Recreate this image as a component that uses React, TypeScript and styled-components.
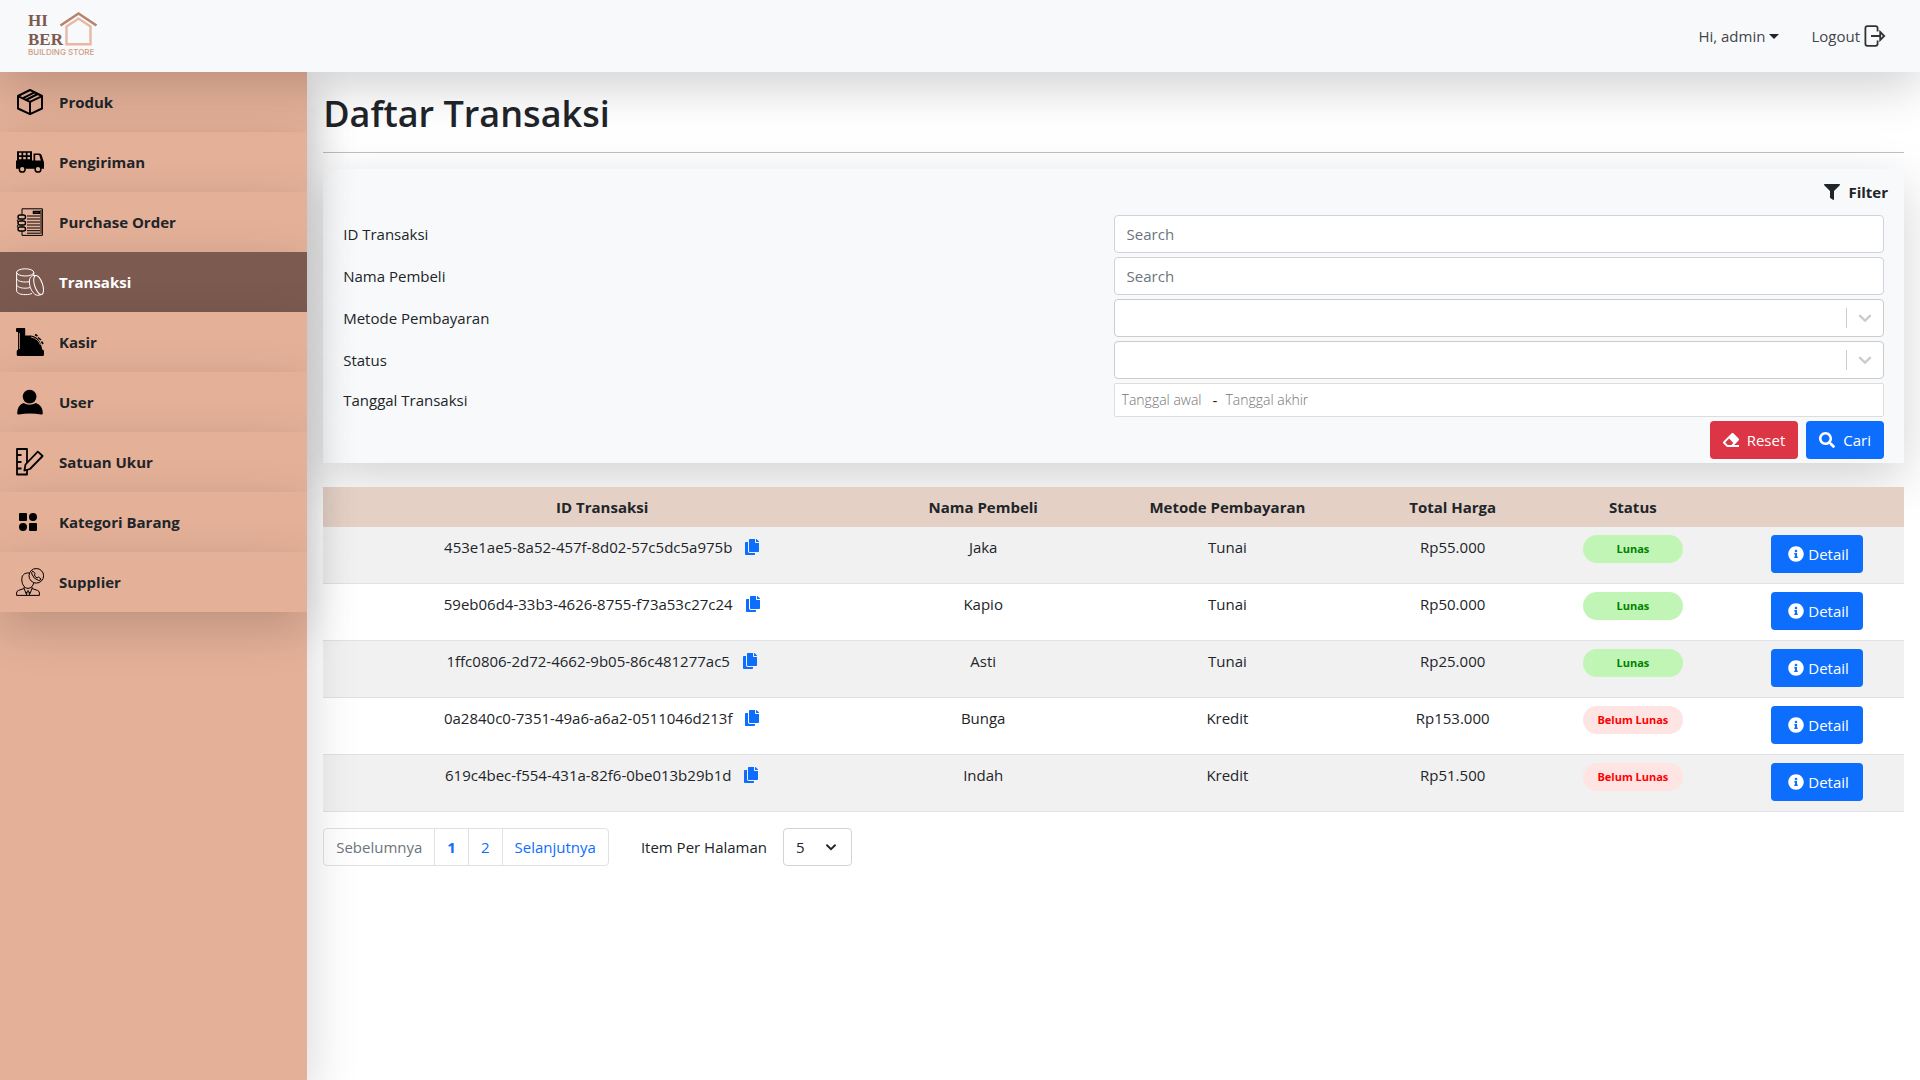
import React from "react";
import styled, { createGlobalStyle } from "styled-components";
import { FaCopy, FaEraser, FaFilter, FaInfoCircle, FaSearch } from "react-icons/fa";

const shadow = "0 16px 48px rgba(0, 0, 0, 0.175)";

const GlobalStyle = createGlobalStyle`
  *, *::before, *::after { box-sizing: border-box; }
  body {
    margin: 0;
    background: #fff;
    color: #212529;
    font-family: "Segoe UI", "Open Sans", "Noto Sans", sans-serif;
    font-size: 15px;
    line-height: 24px;
  }
  button, input, select { font: inherit; color: inherit; margin: 0; }
  a { color: inherit; text-decoration: none; }
`;

const Page = styled.div`
  display: flex;
  flex-direction: column;
  min-height: 100vh;
`;

const Navbar = styled.header`
  position: relative;
  z-index: 3;
  display: flex;
  align-items: center;
  justify-content: space-between;
  height: 72px;
  padding: 0 34px 0 24px;
  background: #f8f9fa;
  box-shadow: ${shadow};
`;

const LogoLink = styled.a`
  display: flex;
`;

const NavActions = styled.nav`
  display: flex;
  align-items: center;
  gap: 32px;
`;

const NavButton = styled.button`
  display: flex;
  align-items: center;
  gap: 4px;
  padding: 0;
  border: 0;
  background: none;
  color: #41464b;
  cursor: pointer;
`;

const Caret = styled.span`
  border-top: 5px solid #212529;
  border-left: 5px solid transparent;
  border-right: 5px solid transparent;
`;

const Body = styled.div`
  display: flex;
  flex: 1;
`;

const Sidebar = styled.aside`
  position: relative;
  z-index: 2;
  flex: 0 0 16%;
  background: #e4b098;
  box-shadow: ${shadow};
`;

const MenuLink = styled.a<{ $active?: boolean }>`
  position: relative;
  display: flex;
  align-items: center;
  gap: 15px;
  height: 60px;
  padding: 0 16px;
  font-weight: 700;
  color: ${(p) => (p.$active ? "#fff" : "#212529")};
  background: ${(p) => (p.$active ? "#7d5a4f" : "#e4b098")};
  box-shadow: ${shadow};
`;

const Main = styled.main`
  flex: 1;
  min-width: 0;
  padding: 16px;
`;

const Title = styled.h1`
  margin: 0;
  font-size: 36px;
  font-weight: 600;
  line-height: 52px;
`;

const Rule = styled.hr`
  margin: 12px 0 16px;
  border: 0;
  border-top: 1px solid #c0c1c2;
`;

const FilterCard = styled.form`
  display: grid;
  gap: 4px;
  padding: 11px 20px 4px;
  background: #f8f9fa;
  box-shadow: ${shadow};
`;

const FilterHeading = styled.div`
  display: flex;
  align-items: center;
  justify-content: flex-end;
  gap: 8px;
  height: 31px;
  margin-right: -4px;
  padding-bottom: 7px;
  font-weight: 700;
`;

const FilterRow = styled.div`
  display: grid;
  grid-template-columns: 1fr 1fr;
  align-items: center;
`;

const TextInput = styled.input`
  width: 100%;
  height: 38px;
  padding: 6px 12px;
  border: 1px solid #ced4da;
  border-radius: 4px;
  background: #fff;
  &::placeholder { color: #6c757d; opacity: 1; }
`;

const SelectBox = styled.div`
  display: grid;
  align-items: center;
`;

const SelectInput = styled.select`
  grid-area: 1 / 1;
  width: 100%;
  height: 38px;
  padding: 0 32px 0 12px;
  border: 1px solid #ccc;
  border-radius: 4px;
  background: #fff;
  appearance: none;
`;

const SelectMark = styled.span`
  grid-area: 1 / 1;
  justify-self: end;
  display: flex;
  align-items: center;
  height: 20px;
  padding: 0 8px;
  margin-right: 1px;
  border-left: 1px solid #ccc;
  color: #ccc;
  pointer-events: none;
`;

const DateRange = styled.div`
  display: flex;
  align-items: center;
  gap: 8px;
  height: 34px;
  padding: 0 7px;
  border: 1px solid #ddd;
  border-radius: 2px;
  background: #fff;
`;

const DateInput = styled.input`
  width: 83px;
  padding: 0;
  border: 0;
  outline: 0;
  background: none;
  font-weight: 300;
  font-size: 14px;
  &::placeholder { color: #757575; opacity: 1; }
`;

const FilterActions = styled.div`
  display: flex;
  justify-content: flex-end;
  gap: 8px;
`;

const Button = styled.button<{ $danger?: boolean; $wide?: boolean }>`
  display: inline-flex;
  align-items: center;
  justify-content: center;
  gap: ${(p) => (p.$wide ? 4 : 8)}px;
  height: 38px;
  padding: ${(p) => (p.$wide ? "0 14px 0 17px" : "0 13px")};
  border: 0;
  border-radius: 4px;
  color: #fff;
  background: ${(p) => (p.$danger ? "#dc3545" : "#0d6efd")};
  cursor: pointer;
`;

const Table = styled.table`
  width: 100%;
  margin: 24px 0 16px;
  border-collapse: separate;
  border-spacing: 0;
  table-layout: fixed;
  text-align: center;
`;

const Th = styled.th<{ $width: string }>`
  width: ${(p) => p.$width};
  height: 40px;
  padding: 0 8px;
  font-weight: 700;
  background: #e4d0c5;
`;

const Tr = styled.tr`
  &:nth-child(odd) { background: #f1f1f1; }
`;

const Td = styled.td`
  height: 57px;
  padding: 8px;
  border-bottom: 1px solid #dee2e6;
  vertical-align: top;
`;

const IdCell = styled.span`
  display: inline-flex;
  align-items: center;
  gap: 12px;
`;

const CopyButton = styled.button`
  display: flex;
  padding: 0;
  border: 0;
  background: none;
  color: #0d6efd;
  cursor: pointer;
`;

const Badge = styled.span<{ $paid: boolean }>`
  display: block;
  width: 100px;
  margin: 0 auto;
  border-radius: 14px;
  font-size: 11px;
  font-weight: 700;
  line-height: 28px;
  color: ${(p) => (p.$paid ? "#008000" : "#ff0000")};
  background: ${(p) => (p.$paid ? "#c1f5b6" : "#ffe4e4")};
`;

const Footer = styled.div`
  display: flex;
  align-items: center;
  gap: 32px;
`;

const Pagination = styled.nav`
  display: flex;
  border: 1px solid #dee2e6;
  border-radius: 4px;
`;

const PageButton = styled.button<{ $current?: boolean }>`
  height: 36px;
  padding: 0 12px;
  border: 0;
  background: none;
  color: #0d6efd;
  font-weight: ${(p) => (p.$current ? 700 : 400)};
  cursor: pointer;
  & + & { border-left: 1px solid #dee2e6; }
  &:disabled { color: #6c757d; }
`;

const PerPage = styled.div`
  display: flex;
  align-items: center;
  gap: 16px;
`;

const PerPageBox = styled.div`
  display: grid;
  align-items: center;
  width: 69px;
`;

const PerPageSelect = styled(SelectInput)`
  border-color: #ced4da;
`;

const PerPageMark = styled.span`
  grid-area: 1 / 1;
  justify-self: end;
  display: flex;
  padding-right: 13px;
  pointer-events: none;
`;

const Logo = () => (
  <svg width="80" height="56" viewBox="24 8 80 56" role="img" aria-label="Hiber Building Store">
    <g fill="#7d5a4f" fontFamily='"Liberation Serif", serif' fontWeight="700" fontSize="17">
      <text x="28" y="26">HI</text>
      <text x="28" y="45">BER</text>
    </g>
    <text x="28" y="55" fill="#cf9c86" fontFamily="Inter, sans-serif" fontWeight="500" fontSize="8">BUILDING STORE</text>
    <path d="M60.5 25.5 78.5 13.5 96.5 25.5" fill="none" stroke="#b5836d" strokeWidth="2.6" />
    <path d="M66.5 44.2V26.5L78.5 18.6 90.5 26.5V44.2Z" fill="none" stroke="#e9b7a3" strokeWidth="2.4" />
  </svg>
);

const LogoutIcon = () => (
  <svg width="22" height="22" viewBox="0 0 22 22" fill="none" stroke="#333" strokeWidth="1.8" aria-hidden="true">
    <path d="M13.6 6.5V3.2Q13.6 1.2 11.6 1.2H3.4Q1.4 1.2 1.4 3.2V18.8Q1.4 20.8 3.4 20.8H11.6Q13.6 20.8 13.6 18.8V15.5" />
    <path d="M7 11H16.5M16.2 7 20.2 11 16.2 15Z" />
  </svg>
);

const ChevronDown = ({ size, stroke }: { size: number; stroke: number }) => (
  <svg width={size} height={size} viewBox="0 0 20 20" fill="none" stroke="currentColor" strokeWidth={stroke} strokeLinecap="round" aria-hidden="true">
    <path d="M5 7.8 10 12.6 15 7.8" />
  </svg>
);

const Glyph = ({ children }: { children: React.ReactNode }) => (
  <svg width="28" height="28" viewBox="0 0 28 28" fill="none" stroke="currentColor" aria-hidden="true">
    {children}
  </svg>
);

const icons = {
  box: (
    <Glyph>
      <g stroke="#000" strokeWidth="2" strokeLinejoin="round">
        <path d="M14 2 26 8V20.5L14 26.2 2 20.5V8Z" />
        <path d="M2.5 8.3 14 13.8 25.5 8.3M14 13.8V26M6.5 10.3 18.5 4.3M9.8 12 21.8 6" />
      </g>
    </Glyph>
  ),
  truck: (
    <Glyph>
      <path fill="#000" stroke="none" d="M1 3.2H16V12.5H17.5V5.5H23.5Q25 5.5 25.6 7L27.4 12.5Q28 13.5 28 15V20.8H25A3.6 3.6 0 0 0 18.8 20.8H9.4A3.6 3.6 0 0 0 3 20.8H0V12.5H1Z" />
      <path fill="#e4b098" stroke="none" d="M3 4.8H5.5V7.2H3ZM7.2 4.8H9.8V7.2H7.2ZM11.5 4.8H14V7.2H11.5ZM3 8.9H5.5V11.3H3ZM7.2 8.9H9.8V11.3H7.2ZM11.5 8.9H14V11.3H11.5ZM19.2 7H23.2L24.8 12.4H19.2Z" />
      <g fill="#e4b098" stroke="#000" strokeWidth="1.5">
        <circle cx="6.2" cy="21.2" r="2.9" />
        <circle cx="22" cy="21.2" r="2.9" />
      </g>
    </Glyph>
  ),
  order: (
    <Glyph>
      <g stroke="#000">
        <path d="M6 7V.8H26.4V27.4H6V23M6 11.5V13M6 17V18.5M25 2V26" />
        <path d="M17.5 3.5H23.5V5.2H17.5Z" strokeWidth="1.5" />
        <path d="M11 8H24M11 11H24M11 14H24M11 17H24M11 20H24M11 22.7H24M11 25.2H24" />
        <rect x="2" y="7" width="7.5" height="4" rx="2" strokeWidth="1.4" />
        <rect x="2" y="13" width="7.5" height="4" rx="2" strokeWidth="1.4" />
        <rect x="2" y="19" width="7.5" height="4" rx="2" strokeWidth="1.4" />
        <path d="M2.5 11 1 12.8 2.5 14M2.5 17 1 18.2 2.5 20" />
      </g>
    </Glyph>
  ),
  coins: (
    <Glyph>
      <ellipse cx="9.2" cy="4.4" rx="8.6" ry="3.6" />
      <path d="M.6 4.4V23C1 25.4 5 26.6 9.2 26.6 12.5 26.6 14.6 26.2 16 25.4M17.8 4.4V8M.6 10.4C1 12.8 5 14 9.2 14 11.5 14 13 13.8 14 13.5M.6 16.6C1 19 5 20.2 9.2 20.2 11 20.2 12.5 20 14 19.6" />
      <ellipse cx="22.6" cy="17" rx="4" ry="10" transform="rotate(-18 22.6 17)" />
      <path d="M19 7.5C15 7 13 10 13.4 15 14 21 17.5 27 21.4 27.3 23 27.3 24.6 27 26 26.4" />
    </Glyph>
  ),
  cashier: (
    <Glyph>
      <path fill="#000" stroke="none" d="M1 0H8.5Q9.2 0 9.2 1V7.6H15C21 8.2 25 13 26.2 21.5 27.5 21.8 28 22.5 28 23.5V26.5Q28 28 26.5 28H2.2Q.7 28 .7 26.5V23.5Q.7 22 2 21.7V4H1Q0 4 0 3V1Q0 0 1 0Z" />
      <path d="M3.4 5V21M15 9C20 10 23 13 24.5 17" stroke="#e4b098" strokeWidth=".8" />
      <path d="M19 6.5 21.5 8M22 9.5 25 12M25.5 13.5 27 16" stroke="#000" strokeWidth="1.6" />
    </Glyph>
  ),
  user: (
    <Glyph>
      <g fill="#000" stroke="none">
        <circle cx="13.6" cy="8.6" r="6.9" />
        <path d="M7.5 15Q13.6 18.4 19.8 15 26.8 17.5 26.8 25.4 26.8 26.7 25.2 26.4 13.6 24.4 2.8 26.4 1.2 26.7 1.2 25.4 1.2 17.5 7.5 15Z" />
      </g>
    </Glyph>
  ),
  ruler: (
    <Glyph>
      <g stroke="#000" strokeWidth="1.8" strokeLinejoin="round">
        <path d="M1 1H11V26.5H1ZM1 7H5.5M1 14H5.5M1 20.5H5.5" />
        <path fill="#e4b098" d="M8.4 22.5 9.5 16.5 21.8 3.6 26.6 8 14 21Z" />
      </g>
    </Glyph>
  ),
  category: (
    <Glyph>
      <g fill="#000" stroke="none">
        <rect x="3" y="5" width="8" height="8" rx="1" />
        <circle cx="17" cy="9" r="4" />
        <circle cx="7" cy="19" r="4" />
        <rect x="13" y="15" width="8" height="8" rx="1" />
      </g>
    </Glyph>
  ),
  supplier: (
    <Glyph>
      <g stroke="#000">
        <circle cx="20.3" cy="7.8" r="7.3" />
        <path d="M13.4 5C8 4.5 5.6 7.5 5.8 12 6 17 9 20.4 12 20.4 15 20.4 17 18 17.8 14.8" />
        <path d="M8.2 19V20.5L2.5 22.4Q.6 23 .6 25V27.4H23.4V25Q23.4 23 21.5 22.4L16 20.5V19M8.2 20.5 10 25.5 12 22.5 14 25.5 16 20.5M11 24 10.5 27M13 24 13.5 27" />
        <path d="M16.8 3.2Q15.2 4 15.8 6 17.5 11 22.5 12.4 24.5 12.8 25 11L22.5 9 21 10Q19 9 18.4 6.8L19.2 5.4Z" />
      </g>
    </Glyph>
  ),
};

const menu: { label: string; icon: keyof typeof icons; active?: boolean }[] = [
  { label: "Produk", icon: "box" },
  { label: "Pengiriman", icon: "truck" },
  { label: "Purchase Order", icon: "order" },
  { label: "Transaksi", icon: "coins", active: true },
  { label: "Kasir", icon: "cashier" },
  { label: "User", icon: "user" },
  { label: "Satuan Ukur", icon: "ruler" },
  { label: "Kategori Barang", icon: "category" },
  { label: "Supplier", icon: "supplier" },
];

const columns = [
  { label: "ID Transaksi", width: "35.3%" },
  { label: "Nama Pembeli", width: "12.9%" },
  { label: "Metode Pembayaran", width: "18%" },
  { label: "Total Harga", width: "10.5%" },
  { label: "Status", width: "12.3%" },
  { label: "", width: "11%" },
];

const transactions = [
  { id: "453e1ae5-8a52-457f-8d02-57c5dc5a975b", buyer: "Jaka", method: "Tunai", total: "Rp55.000", paid: true },
  { id: "59eb06d4-33b3-4626-8755-f73a53c27c24", buyer: "Kapio", method: "Tunai", total: "Rp50.000", paid: true },
  { id: "1ffc0806-2d72-4662-9b05-86c481277ac5", buyer: "Asti", method: "Tunai", total: "Rp25.000", paid: true },
  { id: "0a2840c0-7351-49a6-a6a2-0511046d213f", buyer: "Bunga", method: "Kredit", total: "Rp153.000", paid: false },
  { id: "619c4bec-f554-431a-82f6-0be013b29b1d", buyer: "Indah", method: "Kredit", total: "Rp51.500", paid: false },
];

const FilterSelect = ({ id, label, options }: { id: string; label: string; options: string[] }) => (
  <FilterRow>
    <label htmlFor={id}>{label}</label>
    <SelectBox>
      <SelectInput id={id} defaultValue="">
        <option value="" />
        {options.map((o) => (
          <option key={o}>{o}</option>
        ))}
      </SelectInput>
      <SelectMark>
        <ChevronDown size={20} stroke={2.4} />
      </SelectMark>
    </SelectBox>
  </FilterRow>
);

export default function App() {
  return (
    <Page>
      <GlobalStyle />
      <Navbar>
        <LogoLink href="#">
          <Logo />
        </LogoLink>
        <NavActions>
          <NavButton type="button">
            Hi, admin <Caret />
          </NavButton>
          <NavButton type="button">
            Logout <LogoutIcon />
          </NavButton>
        </NavActions>
      </Navbar>
      <Body>
        <Sidebar>
          {menu.map((m) => (
            <MenuLink key={m.label} href="#" $active={m.active}>
              {icons[m.icon]}
              {m.label}
            </MenuLink>
          ))}
        </Sidebar>
        <Main>
          <Title>Daftar Transaksi</Title>
          <Rule />
          <FilterCard onSubmit={(e) => e.preventDefault()}>
            <FilterHeading>
              <FaFilter size={16} />
              Filter
            </FilterHeading>
            <FilterRow>
              <label htmlFor="trx-id">ID Transaksi</label>
              <TextInput id="trx-id" placeholder="Search" />
            </FilterRow>
            <FilterRow>
              <label htmlFor="buyer">Nama Pembeli</label>
              <TextInput id="buyer" placeholder="Search" />
            </FilterRow>
            <FilterSelect id="method" label="Metode Pembayaran" options={["Tunai", "Kredit"]} />
            <FilterSelect id="status" label="Status" options={["Lunas", "Belum Lunas"]} />
            <FilterRow>
              <label htmlFor="date-from">Tanggal Transaksi</label>
              <DateRange>
                <DateInput id="date-from" placeholder="Tanggal awal" />
                -
                <DateInput aria-label="Tanggal akhir" placeholder="Tanggal akhir" />
              </DateRange>
            </FilterRow>
            <FilterActions>
              <Button type="reset" $danger>
                <FaEraser size={16} />
                Reset
              </Button>
              <Button type="submit">
                <FaSearch size={16} />
                Cari
              </Button>
            </FilterActions>
          </FilterCard>
          <Table>
            <thead>
              <tr>
                {columns.map((c) => (
                  <Th key={c.label} $width={c.width}>
                    {c.label}
                  </Th>
                ))}
              </tr>
            </thead>
            <tbody>
              {transactions.map((t) => (
                <Tr key={t.id}>
                  <Td>
                    <IdCell>
                      {t.id}
                      <CopyButton type="button" aria-label="Salin ID">
                        <FaCopy size={16} />
                      </CopyButton>
                    </IdCell>
                  </Td>
                  <Td>{t.buyer}</Td>
                  <Td>{t.method}</Td>
                  <Td>{t.total}</Td>
                  <Td>
                    <Badge $paid={t.paid}>{t.paid ? "Lunas" : "Belum Lunas"}</Badge>
                  </Td>
                  <Td>
                    <Button type="button" $wide>
                      <FaInfoCircle size={16} />
                      Detail
                    </Button>
                  </Td>
                </Tr>
              ))}
            </tbody>
          </Table>
          <Footer>
            <Pagination aria-label="Halaman">
              <PageButton type="button" disabled>
                Sebelumnya
              </PageButton>
              <PageButton type="button" $current>
                1
              </PageButton>
              <PageButton type="button">2</PageButton>
              <PageButton type="button">Selanjutnya</PageButton>
            </Pagination>
            <PerPage>
              <label htmlFor="per-page">Item Per Halaman</label>
              <PerPageBox>
                <PerPageSelect id="per-page" defaultValue="5">
                  <option>5</option>
                  <option>10</option>
                  <option>20</option>
                </PerPageSelect>
                <PerPageMark>
                  <ChevronDown size={16} stroke={2.4} />
                </PerPageMark>
              </PerPageBox>
            </PerPage>
          </Footer>
        </Main>
      </Body>
    </Page>
  );
}
